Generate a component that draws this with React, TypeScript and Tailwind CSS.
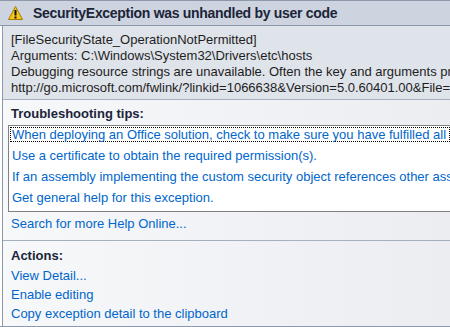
export default function App() {
  const tips = [
    "When deploying an Office solution, check to make sure you have fulfilled all requirements.",
    "Use a certificate to obtain the required permission(s).",
    "If an assembly implementing the custom security object references other assemblies, add them.",
    "Get general help for this exception.",
  ];
  const actions = ["View Detail...", "Enable editing", "Copy exception detail to the clipboard"];

  return (
    <div className="w-[450px] h-[327px] overflow-hidden bg-white font-['Liberation_Sans',Tahoma,sans-serif] text-[13px]">
      <div className="flex flex-col h-full border-t border-b border-[#8d98ab]">
        <div className="h-[25px] shrink-0 flex items-center gap-[10px] pl-[8px] bg-[#cdd4df] border-b border-[#8d98ab]">
          <svg width="15" height="14" viewBox="0 0 15 14">
            <path d="M7.5 0.5 L14.5 13.5 L0.5 13.5 Z" fill="#f6c619" stroke="#a67c00" strokeWidth="1" />
            <rect x="6.5" y="4" width="2" height="5.5" fill="#111" />
            <rect x="6.5" y="10.5" width="2" height="2" fill="#111" />
          </svg>
          <span className="font-bold text-[14px] tracking-[-0.3px] text-[#1b2438] whitespace-nowrap">
            SecurityException was unhandled by user code
          </span>
        </div>

        <div className="ml-[2px] border-l border-[#8d98ab] flex-1 flex flex-col">
          <div className="h-[74px] shrink-0 bg-[#dfe3ea] border-b border-[#a5afc0] pl-[8px] pt-[6px] text-[#1e1e1e] leading-[16px] whitespace-nowrap">
            <div>[FileSecurityState_OperationNotPermitted]</div>
            <div>Arguments: C:\Windows\System32\Drivers\etc\hosts</div>
            <div>Debugging resource strings are unavailable. Often the key and arguments provide sufficient information</div>
            <div>http://go.microsoft.com/fwlink/?linkid=1066638&amp;Version=5.0.60401.00&amp;File=mscorlib.dll</div>
          </div>

          <div className="flex-1 flex flex-col bg-gradient-to-r from-[#f7f8fa] to-[#ebedf1]">
            <div className="pl-[5px] pt-[6px]">
              <div className="pl-[3px] font-bold text-[#1b2438] leading-[16px] mb-[3px]">Troubleshooting tips:</div>
              <div className="bg-white border border-[#808080] border-r-0 h-[87px] pl-[1px] pt-[1px] text-[#0066cc] whitespace-nowrap">
                {tips.map((t, i) => (
                  <div
                    key={t}
                    className={
                      i === 0
                        ? "h-[15px] leading-[14px] border border-dotted border-black px-[1px] mb-[6px]"
                        : "h-[15px] leading-[15px] px-[2px] mb-[6px]"
                    }
                  >
                    {t}
                  </div>
                ))}
              </div>
              <div className="pl-[3px] pt-[4px] h-[28px] leading-[16px] text-[#0066cc]">Search for more Help Online...</div>
            </div>

            <div className="border-t border-[#a5afc0] pl-[8px] pt-[7px] leading-[19px]">
              <div className="font-bold text-[#1b2438] leading-[16px] mb-[2px]">Actions:</div>
              {actions.map((a) => (
                <div key={a} className="text-[#0066cc]">
                  {a}
                </div>
              ))}
            </div>
          </div>
        </div>
      </div>
    </div>
  );
}
